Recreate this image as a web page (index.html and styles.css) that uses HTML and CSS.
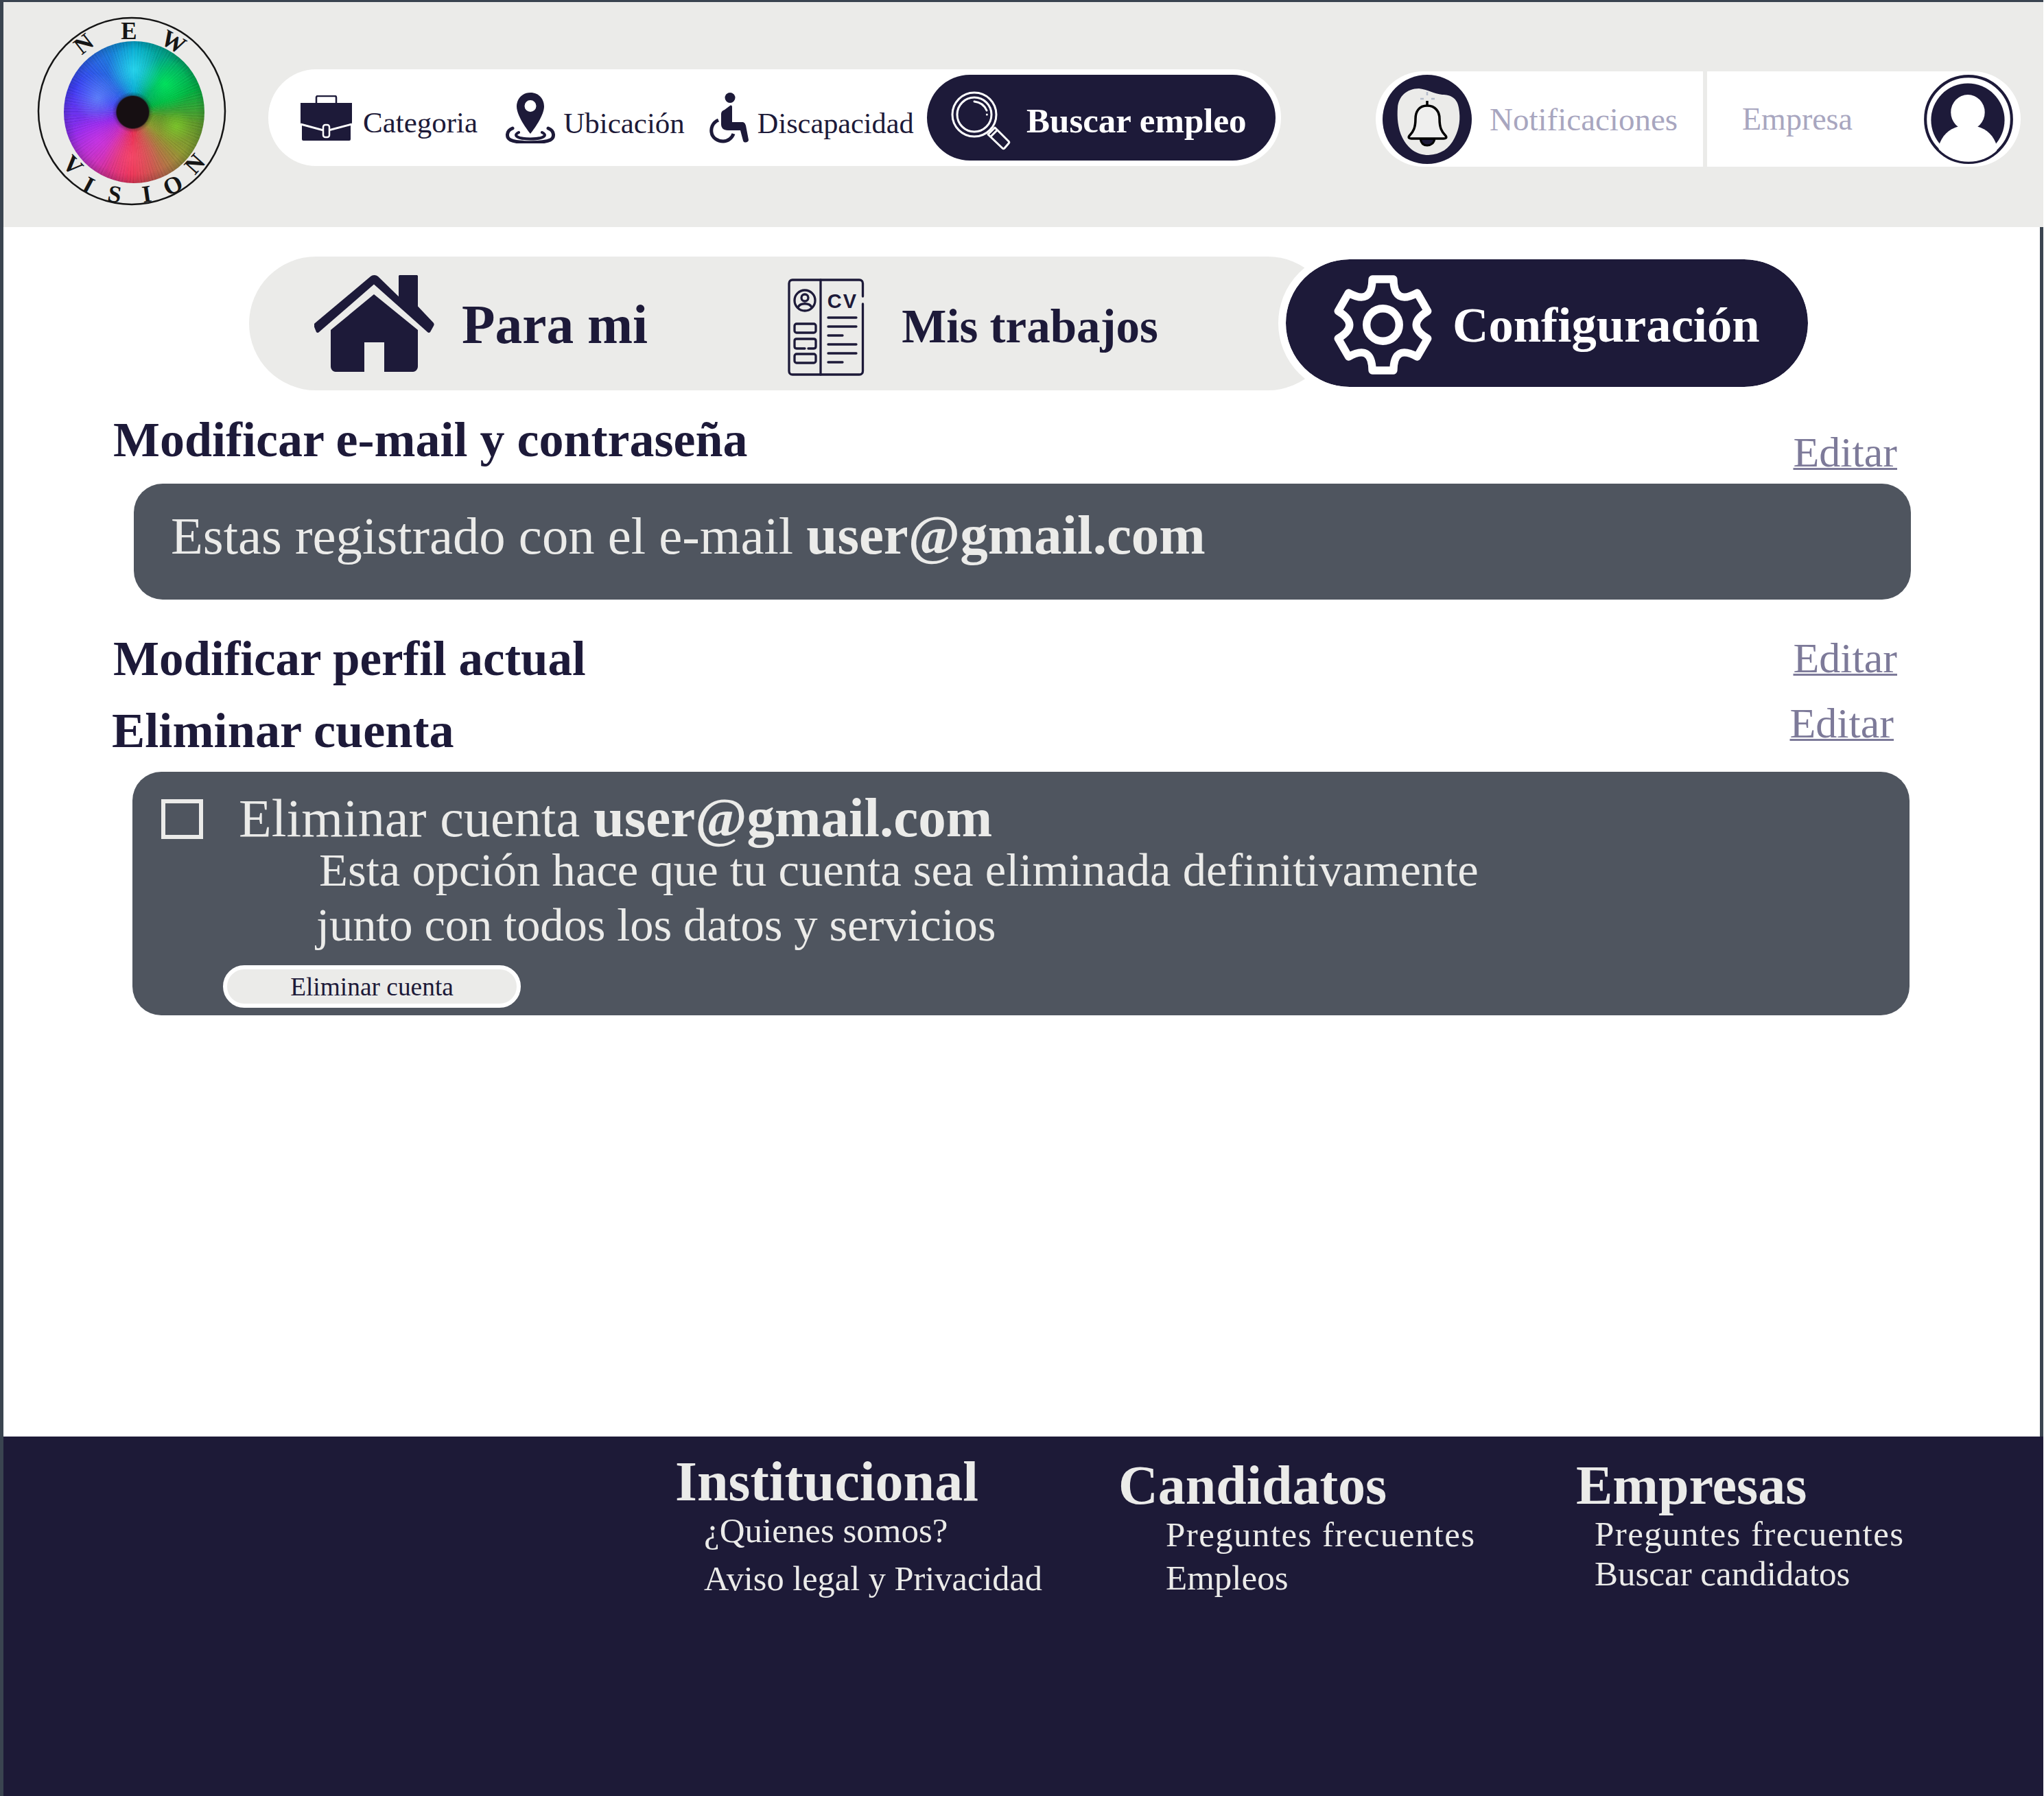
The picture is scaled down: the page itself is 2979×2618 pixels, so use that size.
FILE: index.html
```html
<!DOCTYPE html>
<html lang="es">
<head>
    <meta charset="UTF-8">
    <meta name="viewport" content="width=device-width, initial-scale=1.0">
    <title>New Vision - Configuración</title>
    <link rel="stylesheet" href="styles.css">
</head>
<body>
    <div class="page">
        <header class="topbar">
            <div class="logo">
                <div class="iris"></div>
                <svg class="logo-ring" width="276" height="278" viewBox="0 0 276 278">
                    <circle cx="137" cy="138" r="136" fill="none" stroke="#151515" stroke-width="2.5"/>
                    <g class="logo-letters" text-anchor="middle" dominant-baseline="central">
                        <text transform="translate(67 40) rotate(-38)">N</text>
                        <text transform="translate(133 21)">E</text>
                        <text transform="translate(198 37) rotate(30)">W</text>
                        <text transform="translate(51 217) rotate(45)">V</text>
                        <text transform="translate(74 246) rotate(28)">I</text>
                        <text transform="translate(112 259) rotate(10)">S</text>
                        <text transform="translate(159 259) rotate(-8)">I</text>
                        <text transform="translate(197 246) rotate(-25)">O</text>
                        <text transform="translate(229 215) rotate(-48)">N</text>
                    </g>
                </svg>
            </div>

            <nav class="search-bar">
                <a class="filter filter-cat" href="#">
                    <svg width="75" height="66" viewBox="0 0 75 66">
                        <path d="M23 11V3a2 2 0 0 1 2-2h25a2 2 0 0 1 2 2v8" fill="none" stroke="#1d1a39" stroke-width="2.5"/>
                        <path d="M0 11h75v31l-2 1v21a2 2 0 0 1-2 2H4a2 2 0 0 1-2-2V43l-2-1z" fill="#1d1a39"/>
                        <path d="M0 42l37 10 38-10" fill="none" stroke="#fff" stroke-width="3"/>
                        <rect x="33" y="43" width="9" height="18" rx="3" fill="#1d1a39" stroke="#fff" stroke-width="2.5"/>
                    </svg>
                    <span class="filter-label">Categoria</span>
                </a>
                <a class="filter filter-ubi" href="#">
                    <svg width="74" height="74" viewBox="0 0 74 74">
                        <path fill-rule="evenodd" d="M37 0c13 0 20 10 20 20 0 12-12 30-20 40-8-10-20-28-20-40C17 10 24 0 37 0zm0 11a8.500 8.500 0 1 0 0 17 8.500 8.500 0 0 0 0-17z" fill="#1d1a39"/>
                        <path d="M11 52C1 56 2 66 8 69c10 5 48 5 58 0 6-3 7-13-3-17" fill="none" stroke="#1d1a39" stroke-width="5" stroke-linecap="round"/>
                        <path d="M20 58c-6 3-5 6 2 8 8 2 22 2 30 0 7-2 8-5 2-8" fill="none" stroke="#1d1a39" stroke-width="4" stroke-linecap="round"/>
                    </svg>
                    <span class="filter-label">Ubicación</span>
                </a>
                <a class="filter filter-dis" href="#">
                    <svg width="58" height="74" viewBox="0 0 58 74">
                        <ellipse cx="30" cy="7.500" rx="7.500" ry="7.500" fill="#1d1a39"/>
                        <path d="M22 25l8-6c2-1 3 0 3 2v22h14c4 0 5 2 6 5l4 21c0 4-7 5-8 1l-4-15H27c-7 0-10-4-10-9V31c0-3 2-5 5-6z" fill="#1d1a39"/>
                        <path d="M13 40C4 44 2 52 3 58c1 8 9 13 17 13 7 0 13-5 15-11" fill="none" stroke="#1d1a39" stroke-width="5"/>
                    </svg>
                    <span class="filter-label">Discapacidad</span>
                </a>
                <button class="search-btn" type="button">
                    <svg class="search-icon" width="95" height="90" viewBox="0 0 95 90" fill="none" stroke="#fff" stroke-width="3">
                        <circle cx="40" cy="36" r="32"/>
                        <circle cx="40" cy="36" r="25"/>
                        <path d="M40 17c9 1 15 6 18 13" stroke-linecap="round"/>
                        <path d="M58.300 36h.1" stroke-linecap="round"/>
                        <path d="M60 65l10-10 20 20c1 1 1 2 0 3l-6 7c-1 1-2 1-3 0z" stroke-linejoin="round"/>
                        <path d="M64 68l9-9"/>
                    </svg>
                    <span>Buscar empleo</span>
                </button>
            </nav>

            <div class="account-bar">
                <a class="account-left" href="#">
                    <svg width="132" height="130" viewBox="0 0 132 130">
                        <circle cx="66" cy="65" r="65" fill="#1d1a39"/>
                        <path d="M54 20c12 1 22 8 34 9 12 0 22 5 24 19 3 16 1 30-6 44-8 16-20 24-38 25-18 0-30-10-38-25-7-14-8-30-7-44 1-16 13-28 31-28z" fill="#ebebe9"/>
                        <path d="M56 35h5M72 35h5M66 25v5" stroke="#b4bccb" stroke-width="2.500" fill="none"/>
                        <path d="M66 38v8" stroke="#000" stroke-width="3.500"/>
                        <path d="M56 93c1 7 5 10 10 10s10-3 11-10z" fill="#1d1a39" stroke="#000" stroke-width="3"/>
                        <path d="M66 45c-12 0-17 9-17 19 0 13-3 19-9 25-2 3 0 4 3 4h47c3 0 5-1 3-4-6-6-9-12-9-25 0-10-6-19-18-19z" fill="#efefee" stroke="#000" stroke-width="3.500" stroke-linejoin="round"/>
                    </svg>
                    <span class="account-label account-notif">Notificaciones</span>
                </a>
                <a class="account-right" href="#">
                    <span class="account-label">Empresa</span>
                    <svg class="avatar" width="136" height="132" viewBox="0 0 132 128">
                        <defs>
                            <clipPath id="avatarClip"><circle cx="66" cy="65" r="59"/></clipPath>
                        </defs>
                        <circle cx="66" cy="64" r="61" fill="#fff" stroke="#1d1a39" stroke-width="4"/>
                        <circle cx="65" cy="65" r="52" fill="#1d1a39"/>
                        <g clip-path="url(#avatarClip)" fill="#fff">
                            <ellipse cx="65" cy="54" rx="24" ry="25"/>
                            <path d="M24 102c4-15 14-24 28-28h26c14 4 24 13 28 28v26H24z"/>
                        </g>
                    </svg>
                </a>
            </div>
        </header>

        <main class="content">
            <div class="tabs">
                <div class="tabs-track">
                    <a class="tab tab-home" href="#">
                        <svg width="175" height="141" viewBox="0 0 175 141" fill="#1d1a39">
                            <path d="M82 3c3-4 8-4 11 0l30 43V2c0-1 1-2 2-2h24c1 0 2 1 2 2v65l22 34c2 3 2 5 1 8l-5 13c-1 2-3 2-4 0L87 20 7 122c-1 2-3 2-4 0l-3-11c-1-3-1-5 1-8z" transform="scale(1 .68)"/>
                            <path d="M87 28l64 52v53c0 4-3 8-7 8h-42V98H73v43H31c-4 0-7-4-7-8V80z"/>
                        </svg>
                        <span class="tab-label tab-home-label">Para mi</span>
                    </a>
                    <a class="tab tab-jobs" href="#">
                        <svg class="cv-icon" width="114" height="143" viewBox="17 10 114 143" fill="none" stroke="#1d1a39" stroke-width="3.300" stroke-linecap="round">
                            <path d="M127.500 36V17c0-3-2-5-5-5H25c-3 0-5 2-5 5v128c0 3 2 5 5 5h97.500c3 0 5-2 5-5V47"/>
                            <path d="M66 12v138"/>
                            <circle cx="43" cy="42" r="15"/>
                            <circle cx="43" cy="38" r="5"/>
                            <path d="M33 52c3-7 17-7 20 0"/>
                            <rect x="28" y="76" width="31" height="13" rx="3"/>
                            <path d="M43 112H31c-2 0-3-1-3-3v-8c0-2 1-3 3-3h25c2 0 3 1 3 3v8c0 2-1 3-3 3h-8"/>
                            <rect x="28" y="120" width="31" height="13" rx="3"/>
                            <path d="M77 67h41M77 80h41M77 93h21M77 106h41M77 119h41M77 132h21"/>
                            <text class="cv-text" x="98" y="53" text-anchor="middle">CV</text>
                        </svg>
                        <span class="tab-label tab-jobs-label">Mis trabajos</span>
                    </a>
                </div>
                <a class="tab-active" href="#">
                    <svg class="gear-icon" width="150" height="152" viewBox="0 0 145 147" fill="none" stroke="#fff" stroke-width="11" stroke-linejoin="round">
                        <path d="M57.100 8.700H86.900Q87.500 46.200 120.300 28L135.100 53.700Q103 73 135.100 92.300L120.300 118Q87.500 99.800 86.900 137.300H57.100Q56.500 99.800 23.700 118L8.900 92.300Q41 73 8.900 53.700L23.700 28Q56.500 46.200 57.100 8.700Z"/>
                        <circle cx="72" cy="73" r="23"/>
                    </svg>
                    <span class="tab-active-label">Configuración</span>
                </a>
            </div>

            <section class="row row-mail">
                <h2>Modificar e-mail y contraseña</h2>
                <a class="edit-link" href="#">Editar</a>
            </section>
            <div class="panel panel-mail">
                Estas registrado con el e-mail <strong>user@gmail.com</strong>
            </div>

            <section class="row row-perfil">
                <h2>Modificar perfil actual</h2>
                <a class="edit-link" href="#">Editar</a>
            </section>

            <section class="row row-delete">
                <h2>Eliminar cuenta</h2>
                <a class="edit-link" href="#">Editar</a>
            </section>
            <div class="panel panel-delete">
                <div class="delete-head">
                    <span class="checkbox"></span>
                    <span>Eliminar cuenta <strong>user@gmail.com</strong></span>
                </div>
                <p class="delete-text">Esta opción hace que tu cuenta sea eliminada definitivamente<span class="delete-line">junto con todos los datos y servicios</span></p>
                <button class="delete-btn" type="button">Eliminar cuenta</button>
            </div>
        </main>

        <footer class="footer">
            <div class="foot-col foot-inst">
                <h3>Institucional</h3>
                <a class="first" href="#">¿Quienes somos?</a>
                <a class="second" href="#">Aviso legal y Privacidad</a>
            </div>
            <div class="foot-col foot-cand">
                <h3>Candidatos</h3>
                <a class="wide" href="#">Preguntes frecuentes</a>
                <a href="#">Empleos</a>
            </div>
            <div class="foot-col foot-emp">
                <h3>Empresas</h3>
                <a class="wide" href="#">Preguntes frecuentes</a>
                <a class="shift" href="#">Buscar candidatos</a>
            </div>
        </footer>
    </div>
</body>
</html>
```

FILE: styles.css
```css
* {
    box-sizing: border-box;
}

body {
    margin: 0;
    background: #fff;
    font-family: "Liberation Serif", "Times New Roman", serif;
    color: #1d1a39;
}

a {
    color: inherit;
    text-decoration: none;
}

.page {
    width: 2978px;
    height: 2618px;
    display: flex;
    flex-direction: column;
    border-top: 3px solid #3a4450;
    border-left: 5px solid #3a4450;
}

/* header */
.topbar {
    height: 328px;
    background: #ebebe9;
    display: flex;
    align-items: flex-start;
    justify-content: space-between;
    padding: 21px 33px 0 50px;
}

.logo {
    position: relative;
    width: 276px;
    height: 278px;
    flex-shrink: 0;
}

.iris {
    position: absolute;
    left: 38px;
    top: 36px;
    width: 205px;
    height: 207px;
    border-radius: 50%;
    filter: blur(0.7px);
    background:
        radial-gradient(circle at 49% 50%, #160f12 0 23px, rgba(22, 15, 18, 0.3) 25px, transparent 30px),
        radial-gradient(circle at 50% 20%, rgba(60, 240, 255, 0.6), transparent 20%),
        radial-gradient(circle at 72% 30%, rgba(0, 255, 90, 0.65), transparent 19%),
        radial-gradient(circle at 80% 60%, rgba(140, 255, 40, 0.4), transparent 12%),
        radial-gradient(circle at 24% 40%, rgba(120, 190, 255, 0.5), transparent 18%),
        radial-gradient(circle at 48% 82%, rgba(255, 90, 120, 0.55), transparent 20%),
        radial-gradient(circle at 24% 70%, rgba(220, 60, 255, 0.45), transparent 20%),
        radial-gradient(circle, transparent 62%, rgba(0, 25, 30, 0.58) 93%, rgba(0, 25, 30, 0.2) 98%, transparent 100%),
        repeating-conic-gradient(rgba(255, 255, 255, 0.05) 0 0.7deg, transparent 0.7deg 2.3deg),
        repeating-conic-gradient(rgba(0, 0, 0, 0.06) 0 1.1deg, transparent 1.1deg 3.1deg),
        conic-gradient(#00a6cf 0deg, #00a56a 40deg, #00b040 70deg, #5f9a28 100deg, #8f9a30 130deg, #c0684a 155deg, #ea2c50 182deg, #d02fb0 215deg, #9028ea 250deg, #3c3af5 292deg, #2170e0 330deg, #00a6cf 360deg);
}

.logo-ring {
    position: absolute;
    left: 0;
    top: 0;
    overflow: visible;
}

.logo-letters {
    font-size: 35px;
    font-weight: 700;
    fill: #151515;
}

.search-bar {
    width: 1476px;
    height: 141px;
    margin: 77px 0 0 60px;
    padding: 0 8px 0 47px;
    background: #fff;
    border-radius: 70px;
    display: flex;
    align-items: center;
    font-size: 43px;
}

.filter {
    display: flex;
    align-items: center;
}

.filter-label {
    padding-top: 16px;
}

.filter-cat {
    gap: 16px;
}

.filter-cat .filter-label {
    padding-top: 13px;
}

.filter-ubi {
    gap: 11px;
    margin-left: 40px;
}

.filter-dis {
    gap: 12px;
    margin-left: 36px;
    font-size: 42.3px;
}

.search-btn {
    width: 508px;
    height: 125px;
    margin-left: auto;
    padding: 0 0 0 29px;
    border: 0;
    border-radius: 63px;
    background: #1d1a39;
    color: #fff;
    display: flex;
    align-items: center;
    gap: 21px;
    font-family: inherit;
    font-size: 51px;
    font-weight: 700;
}

.search-btn span {
    padding-top: 8px;
}

.search-icon {
    margin-top: 8px;
}

.account-bar {
    width: 940px;
    height: 139px;
    margin-top: 80px;
    margin-left: auto;
    display: flex;
    gap: 6px;
    color: #a8a6bf;
    font-size: 46px;
}

.account-left,
.account-right {
    background: #fff;
    display: flex;
    align-items: center;
}

.account-left {
    width: 477px;
    padding-left: 9px;
    gap: 25px;
    border-radius: 70px 0 0 70px;
}

.account-right {
    flex: 1;
    padding: 0 8px 0 51px;
    justify-content: space-between;
    border-radius: 0 70px 70px 0;
}

.account-notif {
    font-size: 47px;
}

/* tabs */
.content {
    flex: 1;
    border-right: 5px solid #3a4450;
    display: flex;
    flex-direction: column;
}

.tabs {
    display: flex;
    align-items: center;
    margin: 36px 0 26px 358px;
}

.tabs-track {
    width: 1582px;
    height: 195px;
    padding-left: 95px;
    background: #ebebe9;
    border-radius: 98px;
    display: flex;
    align-items: center;
}

.tab {
    display: flex;
    align-items: center;
    font-weight: 700;
}

.tab-home {
    gap: 40px;
    font-size: 79.4px;
}

.tab-home-label {
    padding-top: 4px;
}

.tab-jobs {
    gap: 53px;
    margin-left: 203px;
    font-size: 69px;
}

.tab-jobs-label {
    padding-top: 10px;
}

.cv-icon {
    margin-top: 12px;
}

.cv-text {
    font-family: "Liberation Sans", Arial, sans-serif;
    font-size: 29px;
    font-weight: 700;
    letter-spacing: 2px;
    stroke: none;
    fill: #1d1a39;
}

.tab-active {
    position: relative;
    width: 783px;
    height: 208px;
    margin-left: -82px;
    padding-left: 67px;
    border: 11px solid #fff;
    border-radius: 104px;
    background: #1d1a39;
    background-clip: padding-box;
    color: #fff;
    display: flex;
    align-items: center;
    gap: 26px;
    font-size: 72.6px;
    font-weight: 700;
}

.tab-active-label {
    padding-top: 5px;
}

.gear-icon {
    margin-top: 5px;
}

/* settings rows */
.row {
    display: flex;
    justify-content: space-between;
    align-items: flex-start;
    width: 2600px;
    margin-left: 160px;
}

.row h2 {
    margin: 0;
    font-size: 72px;
    line-height: 80px;
    font-weight: 700;
}

.edit-link {
    font-size: 62px;
    line-height: 70px;
    color: #7d7a99;
    text-decoration: underline;
    text-decoration-thickness: 3px;
}

.row-mail {
    height: 104px;
}

.row-mail .edit-link {
    margin-top: 23px;
}

.row-perfil {
    height: 99px;
    margin-top: 46px;
}

.row-perfil h2 {
    font-size: 71px;
}

.row-perfil .edit-link {
    margin-top: 4px;
}

.row-delete {
    height: 106px;
    width: 2597px;
    margin-left: 158px;
}

.row-delete h2 {
    margin-top: 6px;
    font-size: 72.3px;
}

.panel {
    background: #4f555f;
    color: #ebebe9;
    border-radius: 42px;
}

.panel-mail {
    width: 2590px;
    height: 169px;
    margin-left: 190px;
    padding: 25px 0 0 54px;
    font-size: 76.7px;
    line-height: 100px;
}

.panel-mail strong {
    font-size: 81px;
}

.panel-delete {
    width: 2590px;
    height: 355px;
    margin-left: 188px;
    padding-top: 31px;
}

.delete-head {
    display: flex;
    font-size: 78.2px;
    line-height: 72px;
}

.delete-head strong {
    font-size: 81px;
}

.checkbox {
    width: 61px;
    height: 58px;
    margin: 9px 52px 0 42px;
    border: 6px solid #ebebe9;
    flex-shrink: 0;
}

.delete-text {
    margin: -1px 0 0 272px;
    font-size: 68.7px;
    line-height: 80px;
}

.delete-line {
    display: block;
    margin-left: -4px;
    letter-spacing: -0.15px;
}

.delete-btn {
    display: block;
    width: 434px;
    height: 62px;
    margin: 19px 0 0 132px;
    padding: 0;
    border: 6px solid #fff;
    border-radius: 31px;
    background: #ebebe9;
    color: #1d1a39;
    font-family: inherit;
    font-size: 37.4px;
}

/* footer */
.footer {
    height: 524px;
    background: #1d1a37;
    color: #ebebe9;
    padding-left: 979px;
    display: flex;
}

.foot-col {
    display: flex;
    flex-direction: column;
    align-items: flex-start;
}

.foot-col h3 {
    margin: 0;
    font-weight: 700;
}

.foot-inst {
    width: 646px;
    padding-top: 24px;
    font-size: 51px;
    line-height: 68px;
}

.foot-inst h3 {
    font-size: 82px;
    line-height: 84px;
}

.foot-inst a {
    margin-left: 42px;
}

.foot-inst .first {
    margin-top: -5px;
}

.foot-inst .second {
    margin-top: 2px;
    font-size: 50.4px;
}

.foot-cand {
    width: 667px;
    padding-top: 30px;
    font-size: 51px;
    line-height: 63px;
}

.foot-cand h3,
.foot-emp h3 {
    font-size: 80px;
    line-height: 82px;
}

.foot-cand a {
    margin-left: 69px;
}

.foot-emp {
    padding-top: 30px;
    font-size: 51px;
    line-height: 55px;
}

.foot-emp a {
    margin-left: 27px;
}

.foot-emp a.wide {
    margin-top: 3px;
}

.foot-emp a.shift {
    margin-top: 3px;
}

.foot-col .wide {
    letter-spacing: 1.4px;
}
```
